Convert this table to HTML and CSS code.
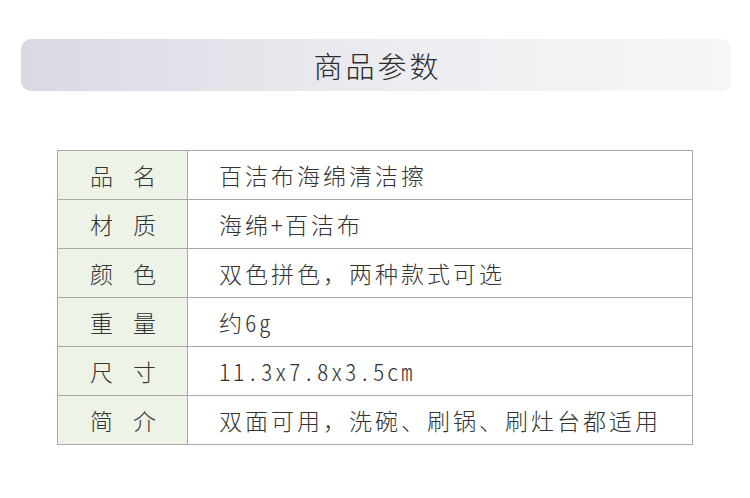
FILE: index.html
```html
<!DOCTYPE html>
<html lang="zh">
<head>
<meta charset="utf-8">
<link rel="stylesheet" href="styles.css">
</head>
<body>
<div class="banner"><h1 class="title">商品参数</h1></div>
<div class="spec">
  <div class="row"><div class="label"><span>品</span><span>名</span></div><div class="value">百洁布海绵清洁擦</div></div>
  <div class="row"><div class="label"><span>材</span><span>质</span></div><div class="value">海绵<span class="lat">+</span>百洁布</div></div>
  <div class="row"><div class="label"><span>颜</span><span>色</span></div><div class="value">双色拼色，两种款式可选</div></div>
  <div class="row"><div class="label"><span>重</span><span>量</span></div><div class="value">约<span class="lat">6g</span></div></div>
  <div class="row"><div class="label"><span>尺</span><span>寸</span></div><div class="value"><span class="lat">11.3x7.8x3.5cm</span></div></div>
  <div class="row"><div class="label"><span>简</span><span>介</span></div><div class="value">双面可用，洗碗、刷锅、刷灶台都适用</div></div>
</div>
</body>
</html>
```
FILE: styles.css
```css
html, body {
  margin: 0;
  padding: 0;
  background: #ffffff;
}
body {
  font-family: "Noto Sans CJK SC", "Noto Sans", sans-serif;
  font-weight: 300;
  color: #333333;
  padding-top: 39px;
}
.banner {
  margin-left: 21px;
  width: 710px;
  height: 52px;
  border-radius: 10px;
  background: linear-gradient(90deg, #d8d9e2 0%, #e6e7ed 35%, #f1f1f4 70%, #f6f6f8 100%);
  display: flex;
  align-items: center;
  justify-content: center;
}
.title {
  margin: 0;
  font-weight: 300;
  font-size: 29px;
  letter-spacing: 3px;
  text-indent: 3px;
  color: #2b2b2b;
  line-height: 1;
}
.spec {
  margin-top: 59px;
  margin-left: 57px;
  width: 636px;
  border: 1px solid #a9a9a9;
  border-top: none;
  box-sizing: border-box;
}
.row {
  display: grid;
  grid-template-columns: 130px 1fr;
  height: 49px;
  border-top: 1px solid #a9a9a9;
  box-sizing: border-box;
}
.label {
  background: #eef3e8;
  border-right: 1px solid #a9a9a9;
  display: flex;
  align-items: center;
  justify-content: center;
  gap: 20px;
  font-size: 23px;
  color: #333333;
  padding-left: 1px;
}
.value {
  display: flex;
  align-items: center;
  padding-left: 31px;
  font-size: 23px;
  letter-spacing: 3px;
  color: #333333;
  white-space: nowrap;
}
.lat {
  font-feature-settings: "hwid" 1;
  letter-spacing: 2.5px;
}
```
